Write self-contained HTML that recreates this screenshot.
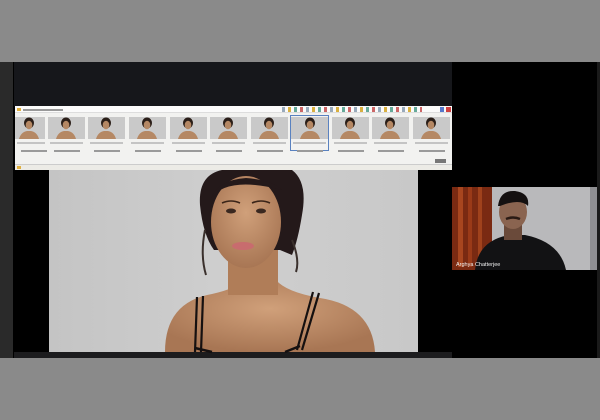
<!DOCTYPE html>
<html><head><meta charset="utf-8"><style>
*{margin:0;padding:0;box-sizing:border-box}
body{width:600px;height:420px;overflow:hidden;background:#8a8a8a;position:relative;font-family:"Liberation Sans",sans-serif}
.abs{position:absolute}
.th{position:absolute;top:117px;width:37px;height:34px}
.th .im{position:absolute;left:0;top:0;width:37px;height:22px;background:#c9c9c9;overflow:hidden}
.th .l1{position:absolute;left:2px;top:25px;width:33px;height:2px;background:#c4c4c4}
.th .l2{position:absolute;left:6px;top:33px;width:26px;height:2px;background:#9a9a9a}
</style></head><body>
<div class="abs" style="left:0;top:62px;width:600px;height:296px;background:#000"></div>
<div class="abs" style="left:0;top:62px;width:13px;height:296px;background:#2a2a2a"></div>
<div class="abs" style="left:14px;top:62px;width:438px;height:44px;background:#16171b"></div>
<div class="abs" style="left:14px;top:352px;width:438px;height:6px;background:#1c1c1e"></div>
<div class="abs" style="left:597px;top:62px;width:3px;height:296px;background:#1a1a1a"></div>

<div class="abs" style="left:15px;top:106px;width:437px;height:64px;background:#f2f2f0"></div>
<div class="abs" style="left:15px;top:106px;width:437px;height:7px;background:#fbfbfb;border-bottom:1px solid #ddd"></div>
<div class="abs" style="left:17px;top:108px;width:4px;height:3px;background:#e0b040"></div>
<div class="abs" style="left:23px;top:108.5px;width:40px;height:2px;background:#999"></div>
<div class="abs" style="left:282px;top:107px;width:140px;height:5px;background:repeating-linear-gradient(90deg,#9ab 0 3px,#fbfbfb 3px 6px,#d9b040 6px 9px,#fbfbfb 9px 12px,#6a9 12px 15px,#fbfbfb 15px 18px,#c66 18px 21px,#fbfbfb 21px 24px)"></div>
<div class="abs" style="left:440px;top:107px;width:4px;height:5px;background:#5577cc"></div>
<div class="abs" style="left:446px;top:107px;width:5px;height:5px;background:#d04040"></div>
<div class="abs" style="left:15px;top:164px;width:437px;height:6px;background:#ecebe6;border-top:1px solid #ccc"></div>
<div class="abs" style="left:17px;top:165.5px;width:4px;height:3px;background:#e0b040"></div>
<div class="abs" style="left:435px;top:159px;width:11px;height:4px;background:#777"></div>
<div class="abs" style="left:290px;top:115px;width:39px;height:36px;border:1.5px solid #5a82c0"></div>

<div class="th" style="left:15px;width:30px"><div class="im" style="width:30px"></div><div class="l1" style="width:28px"></div><div class="l2"></div></div>
<div class="th" style="left:48px"><div class="im"></div><div class="l1"></div><div class="l2"></div></div>
<div class="th" style="left:88px"><div class="im"></div><div class="l1"></div><div class="l2"></div></div>
<div class="th" style="left:129px"><div class="im"></div><div class="l1"></div><div class="l2"></div></div>
<div class="th" style="left:170px"><div class="im"></div><div class="l1"></div><div class="l2"></div></div>
<div class="th" style="left:210px"><div class="im"></div><div class="l1"></div><div class="l2"></div></div>
<div class="th" style="left:251px"><div class="im"></div><div class="l1"></div><div class="l2"></div></div>
<div class="th" style="left:291px"><div class="im"></div><div class="l1"></div><div class="l2"></div></div>
<div class="th" style="left:332px"><div class="im"></div><div class="l1"></div><div class="l2"></div></div>
<div class="th" style="left:372px"><div class="im"></div><div class="l1"></div><div class="l2"></div></div>
<div class="th" style="left:413px"><div class="im"></div><div class="l1"></div><div class="l2"></div></div>

<svg class="abs" style="left:0;top:0" width="600" height="420">
<defs><g id="t">
<ellipse cx="0" cy="-4" rx="5" ry="5.5" fill="#2a1e18"/>
<ellipse cx="0" cy="-2" rx="3.3" ry="4.3" fill="#b58864"/>
<path d="M-10 12 Q-8 5 -2 4 L2 4 Q8 5 10 12 Z" fill="#b58864"/>
</g>
<linearGradient id="bg" x1="0" x2="1"><stop offset="0" stop-color="#c4c4c4"/><stop offset="0.5" stop-color="#cfcfcf"/><stop offset="1" stop-color="#c8c8c8"/></linearGradient>
<radialGradient id="sk" cx="0.5" cy="0.4" r="0.6"><stop offset="0" stop-color="#d0a07a"/><stop offset="1" stop-color="#a87654"/></radialGradient>
</defs>
<use href="#t" x="29" y="127"/><use href="#t" x="66" y="127"/><use href="#t" x="106" y="127"/>
<use href="#t" x="147" y="127"/><use href="#t" x="188" y="127"/><use href="#t" x="228" y="127"/>
<use href="#t" x="269" y="127"/><use href="#t" x="310" y="127"/><use href="#t" x="350" y="127"/>
<use href="#t" x="390" y="127"/><use href="#t" x="431" y="127"/>

<rect x="49" y="170" width="369" height="182" fill="url(#bg)"/>
<path d="M200 205 Q198 175 222 170 L292 170 Q308 182 302 215 Q298 240 292 255 L280 250 L214 250 Q203 235 200 205Z" fill="#24191a"/>
<path d="M205 230 Q200 255 206 275 M292 240 Q300 260 296 272" stroke="#3a302c" stroke-width="2" fill="none"/>
<path d="M165 352 Q165 302 212 294 Q238 288 244 280 L276 280 Q286 292 320 298 Q372 306 375 352 Z" fill="url(#sk)"/>
<rect x="228" y="250" width="50" height="45" fill="#b07d58"/>
<ellipse cx="246" cy="222" rx="35" ry="46" fill="url(#sk)"/>
<path d="M211 198 Q228 176 282 190 Q272 180 246 178 Q218 180 211 198Z" fill="#24191a"/>
<ellipse cx="231" cy="211" rx="5" ry="2.5" fill="#3a2820"/>
<ellipse cx="261" cy="211" rx="5" ry="2.5" fill="#3a2820"/>
<path d="M222 203 Q231 199 240 203" stroke="#3a2418" stroke-width="1.6" fill="none"/>
<path d="M252 203 Q261 199 270 203" stroke="#3a2418" stroke-width="1.6" fill="none"/>
<ellipse cx="243" cy="246" rx="11" ry="4" fill="#c86c6e"/>
<path d="M195 352 L197 297 M201 352 L203 296 M297 350 L313 292 M302 350 L319 293" stroke="#151010" stroke-width="2.2"/>
<path d="M195 348 L212 352 M285 352 L300 346" stroke="#151010" stroke-width="2.5"/>

<rect x="452" y="187" width="145" height="83" fill="#b9b9bb"/>
<rect x="452" y="187" width="40" height="83" fill="#7a2a12"/>
<rect x="458" y="187" width="5" height="80" fill="#a8461f"/>
<rect x="468" y="187" width="4" height="80" fill="#9a3a18"/>
<rect x="478" y="187" width="4" height="80" fill="#a0421c"/>
<path d="M475 270 Q478 240 510 235 L525 235 Q560 242 566 270Z" fill="#121214"/>
<rect x="504" y="218" width="18" height="22" fill="#6a4a3a"/>
<ellipse cx="513" cy="212" rx="14" ry="17" fill="#8a6450"/>
<path d="M498 206 Q500 190 515 191 Q530 193 528 206 Q520 198 500 206Z" fill="#141010"/>
<path d="M506 219 Q513 216 520 219" stroke="#2a1a14" stroke-width="2.5" fill="none"/>
<rect x="590" y="187" width="7" height="83" fill="#8f8f92"/>
<text x="456" y="266" font-family="Liberation Sans, sans-serif" font-size="5.5" fill="#f0f0f0">Arghya Chatterjee</text>
</svg>
</body></html>
